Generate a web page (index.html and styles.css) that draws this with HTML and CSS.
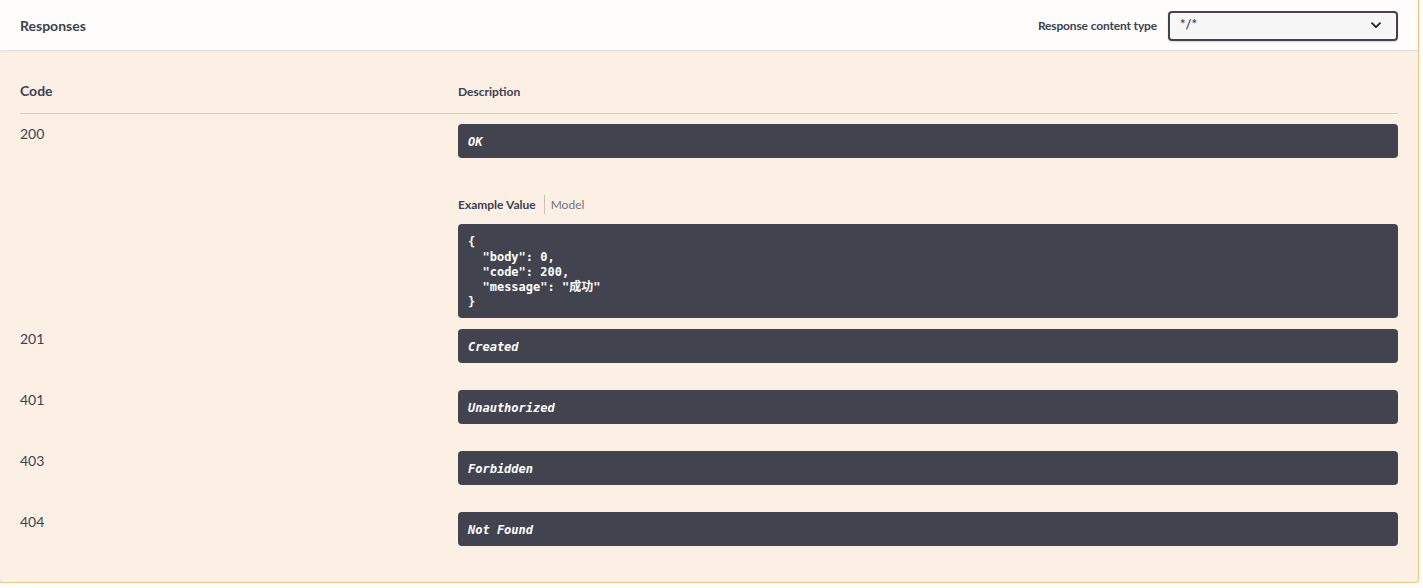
FILE: index.html
```html
<!DOCTYPE html>
<html lang="zh-CN">
<head>
<meta charset="utf-8">
<title>Responses</title>
<link rel="stylesheet" href="styles.css">
</head>
<body>
<div class="opblock">
  <div class="section-header">
    <h4 class="section-title">Responses</h4>
    <label class="content-type">
      <span class="content-type-label">Response content type</span>
      <span class="select">
        <span class="select-value">*/*</span>
        <svg class="chevron" width="10" height="7" viewBox="0 0 10 7"><path d="M1 1.2 L5 5.2 L9 1.2" fill="none" stroke="#222" stroke-width="1.8" stroke-linecap="round" stroke-linejoin="round"/></svg>
      </span>
    </label>
  </div>
  <div class="responses-inner">
    <div class="table-head">
      <div class="th th-code">Code</div>
      <div class="th th-desc">Description</div>
    </div>

    <div class="row">
      <div class="status">200</div>
      <div class="desc">
        <div class="desc-box desc-box-tight">OK</div>
        <div class="tabs">
          <span class="tab tab-active">Example Value</span>
          <span class="tab tab-model">Model</span>
        </div>
        <pre class="example">{
  "body": 0,
  "code": 200,
  "message": "成功"
}</pre>
      </div>
    </div>

    <div class="row">
      <div class="status">201</div>
      <div class="desc"><div class="desc-box">Created</div></div>
    </div>

    <div class="row">
      <div class="status">401</div>
      <div class="desc"><div class="desc-box">Unauthorized</div></div>
    </div>

    <div class="row">
      <div class="status">403</div>
      <div class="desc"><div class="desc-box">Forbidden</div></div>
    </div>

    <div class="row">
      <div class="status">404</div>
      <div class="desc"><div class="desc-box">Not Found</div></div>
    </div>
  </div>
</div>
</body>
</html>
```
FILE: styles.css
```css
html, body {
  margin: 0;
  padding: 0;
  background: #ffffff;
}

body {
  font-family: Lato, "Open Sans", sans-serif;
  color: #3b4151;
}

.opblock {
  width: 1418px;
  margin-left: -1px;
  border: 1px solid #f6c57f;
  border-top: none;
  border-radius: 0 0 4px 4px;
  background: #fcf0e5;
}

.section-header {
  height: 50px;
  box-sizing: border-box;
  padding: 0 20px;
  display: flex;
  align-items: center;
  justify-content: space-between;
  background: #fefdfc;
  box-shadow: 0 1px 2px rgba(0, 0, 0, 0.1);
  position: relative;
}

.section-title {
  margin: 0;
  font-size: 14px;
  font-weight: 700;
  line-height: 20px;
  padding-top: 2px;
}

.content-type {
  display: flex;
  align-items: center;
  gap: 11px;
  padding-top: 1px;
}

.content-type-label {
  font-size: 12px;
  font-weight: 700;
  letter-spacing: -0.15px;
}

.select {
  width: 230px;
  height: 30px;
  box-sizing: border-box;
  border: 2px solid #41444e;
  border-radius: 4px;
  background: #f7f7f7;
  display: flex;
  align-items: center;
  justify-content: space-between;
  padding: 0 15px 0 10px;
  box-shadow: 0 1px 2px rgba(0, 0, 0, 0.15);
}

.select-value {
  font-size: 13px;
  font-weight: 600;
  color: #3b4151;
  margin-top: -4px;
}

.chevron {
  display: block;
}

.responses-inner {
  padding: 19px 20px 19px 20px;
}

.table-head {
  display: grid;
  grid-template-columns: 438px 1fr;
  align-items: center;
  padding: 12px 0;
  border-bottom: 1px solid rgba(59, 65, 81, 0.2);
}

.th {
  line-height: 20px;
  font-weight: 700;
}

.th-code {
  font-size: 14px;
}

.th-desc {
  font-size: 12px;
  line-height: 21px;
  height: 20px;
}

.row {
  display: grid;
  grid-template-columns: 438px 1fr;
  padding-top: 10px;
}

.status {
  font-size: 14px;
  line-height: 18px;
  padding-top: 1px;
  color: #3b4151;
}

.desc-box {
  background: #41444e;
  color: #ffffff;
  border-radius: 4px;
  padding: 11px 10px 9px;
  font-family: "DejaVu Sans Mono", monospace;
  font-size: 12px;
  line-height: 14px;
  font-weight: 700;
  font-style: italic;
  margin-bottom: 17px;
}

.desc-box-tight {
  margin-bottom: 36px;
}

.tabs {
  display: flex;
  align-items: stretch;
  height: 20px;
  box-sizing: border-box;
  padding-top: 1px;
  line-height: 19px;
  font-size: 12px;
}

.tab-active {
  font-weight: 700;
  padding-right: 8px;
  border-right: 1px solid rgba(0, 0, 0, 0.2);
}

.tab-model {
  color: #70747e;
  padding-left: 6px;
}

.example {
  margin: 10px 0 1px;
  padding: 11px 10px 8px;
  height: 94px;
  box-sizing: border-box;
  overflow: hidden;
  background: #41444e;
  color: #ffffff;
  border-radius: 4px;
  font-family: "DejaVu Sans Mono", "Noto Sans CJK SC", monospace;
  font-size: 12px;
  line-height: 15px;
  font-weight: 700;
  white-space: pre-wrap;
}
```
